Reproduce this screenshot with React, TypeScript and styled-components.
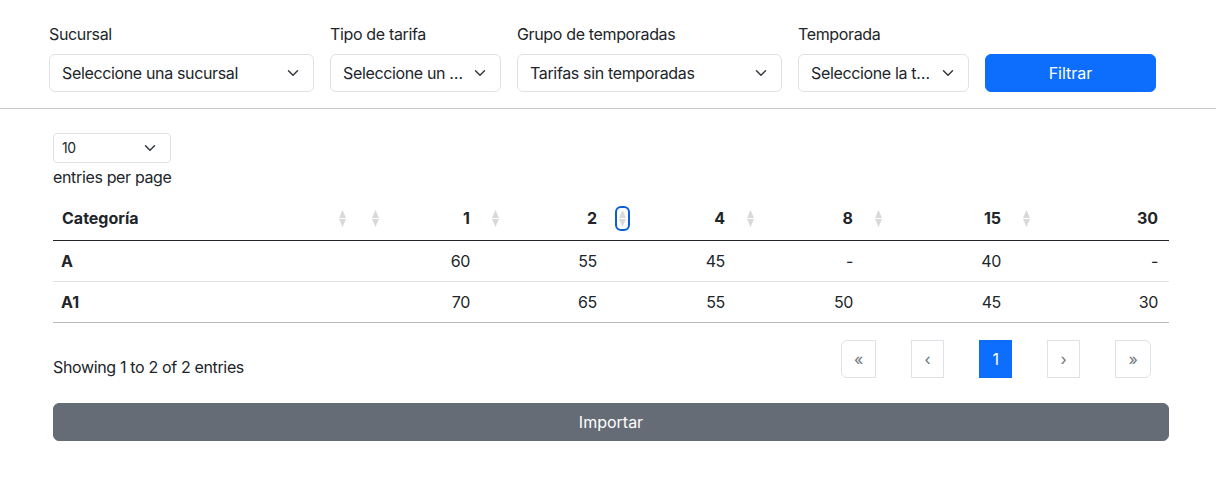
import React from "react";
import styled, { createGlobalStyle } from "styled-components";

const GlobalStyle = createGlobalStyle`
  * { box-sizing: border-box; }
  body {
    margin: 0;
    background: #fff;
    color: #212529;
    font-family: Inter, "Noto Sans", "Liberation Sans", sans-serif;
    font-size: 16px;
    line-height: 24px;
    letter-spacing: -0.35px;
  }
`;

const FilterBar = styled.div`
  display: flex;
  align-items: flex-end;
  gap: 16px;
  padding: 22px 0 16px 49px;
`;

const Field = styled.div<{ $w: number }>`
  display: flex;
  flex-direction: column;
  width: ${(p) => p.$w}px;
`;

const Label = styled.label`
  font-size: 16px;
  line-height: 24px;
  margin-bottom: 8px;
`;

const SelectBox = styled.div<{ $small?: boolean }>`
  display: flex;
  align-items: center;
  gap: 4px;
  height: ${(p) => (p.$small ? 30 : 38)}px;
  padding: 0 12px 0 ${(p) => (p.$small ? 8 : 12)}px;
  border: 1px solid #dee2e6;
  border-radius: ${(p) => (p.$small ? 4 : 6)}px;
  background: #fff;
  font-size: ${(p) => (p.$small ? 14 : 16)}px;
  color: #212529;
`;

const SelectText = styled.span`
  flex: 1;
  min-width: 0;
  white-space: nowrap;
  overflow: hidden;
`;

const PrimaryButton = styled.button`
  width: 171px;
  height: 38px;
  border: 1px solid #0d6efd;
  border-radius: 6px;
  background: #0d6efd;
  color: #fff;
  font: inherit;
  font-size: 16px;
`;

const Divider = styled.hr`
  margin: 0;
  border: 0;
  border-top: 1px solid #c8c9ca;
`;

const Main = styled.div`
  padding: 24px 47px 0 53px;
`;

const PerPage = styled.div`
  width: 118px;
`;

const EntriesText = styled.div`
  margin-top: 2px;
  line-height: 24px;
`;

const Table = styled.div`
  margin-top: 10px;
`;

const Row = styled.div<{ $head?: boolean; $last?: boolean }>`
  display: grid;
  grid-template-columns: 305px 120px 127px 128px 128px 148px 1fr;
  height: ${(p) => (p.$head ? 42 : 41)}px;
  padding: 0 3px ${(p) => (p.$head ? 3 : 0)}px 0;
  border-bottom: 1px solid
    ${(p) => (p.$head ? "#212529" : p.$last ? "#b9bcbf" : "#dee2e6")};
`;

const Cell = styled.div<{ $bold?: boolean; $left?: boolean }>`
  display: flex;
  align-items: center;
  justify-content: ${(p) => (p.$left ? "flex-start" : "flex-end")};
  padding: 0 8px;
  font-weight: ${(p) => (p.$bold ? 700 : 400)};
  letter-spacing: ${(p) => (p.$bold ? 0 : -0.35)}px;
  white-space: nowrap;
`;

const HeadCell = styled.div<{ $first?: boolean }>`
  display: flex;
  align-items: center;
  justify-content: space-between;
  padding: ${(p) => (p.$first ? "0 12px 0 9px" : "0 8px 0 14px")};
  font-weight: 700;
  letter-spacing: 0;
  white-space: nowrap;
`;

const SortWrap = styled.span<{ $focus?: boolean }>`
  display: inline-flex;
  align-items: center;
  justify-content: center;
  width: 7px;
  height: 17px;
  ${(p) =>
    p.$focus
      ? `outline: 2px solid #0b5ed7; outline-offset: 2px; border-radius: 2px;`
      : ""}
`;

const Footer = styled.div`
  display: flex;
  justify-content: space-between;
  align-items: flex-end;
  margin-top: 17px;
`;

const Info = styled.div`
  line-height: 24px;
  margin-bottom: -1px;
`;

const Pagination = styled.nav`
  display: flex;
  gap: 35px;
  padding-right: 18px;
`;

const PageBox = styled.span<{ $w: number; $active?: boolean; $pos?: "first" | "last" }>`
  display: flex;
  align-items: center;
  justify-content: center;
  width: ${(p) => p.$w}px;
  height: 38px;
  border: 1px solid ${(p) => (p.$active ? "#0d6efd" : "#dee2e6")};
  background: ${(p) => (p.$active ? "#0d6efd" : "#fff")};
  color: ${(p) => (p.$active ? "#fff" : "#6c757d")};
  border-radius: ${(p) =>
    p.$pos === "first" ? "6px 0 0 6px" : p.$pos === "last" ? "0 6px 6px 0" : "0"};
  font-size: 16px;
`;

const SecondaryButton = styled.button`
  display: block;
  width: 100%;
  height: 38px;
  margin-top: 25px;
  border: 1px solid #656c75;
  border-radius: 6px;
  background: #656c75;
  color: #fff;
  font: inherit;
  font-size: 16px;
`;

const Chevron = () => (
  <svg width="16" height="12" viewBox="0 0 16 16" style={{ flexShrink: 0 }}>
    <path
      d="M2 5l6 6 6-6"
      fill="none"
      stroke="#343a40"
      strokeWidth="2"
      strokeLinecap="round"
      strokeLinejoin="round"
    />
  </svg>
);

const SortIcon = ({ focus }: { focus?: boolean }) => (
  <SortWrap $focus={focus}>
    <svg width="7" height="17" viewBox="0 0 7 17">
      <polygon points="3.5,0 7,8 0,8" fill="#d9d9d9" />
      <polygon points="0,9 7,9 3.5,17" fill="#d9d9d9" />
    </svg>
  </SortWrap>
);

const filters = [
  { label: "Sucursal", value: "Seleccione una sucursal", w: 265 },
  { label: "Tipo de tarifa", value: "Seleccione un …", w: 171 },
  { label: "Grupo de temporadas", value: "Tarifas sin temporadas", w: 265 },
  { label: "Temporada", value: "Seleccione la t…", w: 171 },
];

const headers = ["1", "2", "4", "8", "15", "30"];
const rows = [
  { cat: "A", vals: ["60", "55", "45", "-", "40", "-"] },
  { cat: "A1", vals: ["70", "65", "55", "50", "45", "30"] },
];

export default function App() {
  return (
    <>
      <GlobalStyle />
      <FilterBar>
        {filters.map((f) => (
          <Field key={f.label} $w={f.w}>
            <Label>{f.label}</Label>
            <SelectBox>
              <SelectText>{f.value}</SelectText>
              <Chevron />
            </SelectBox>
          </Field>
        ))}
        <PrimaryButton>Filtrar</PrimaryButton>
      </FilterBar>
      <Divider />
      <Main>
        <PerPage>
          <SelectBox $small>
            <SelectText>10</SelectText>
            <Chevron />
          </SelectBox>
        </PerPage>
        <EntriesText>entries per page</EntriesText>
        <Table>
          <Row $head>
            <HeadCell $first>
              <span>Categoría</span>
              <SortIcon />
            </HeadCell>
            {headers.map((h, i) => (
              <HeadCell key={h}>
                <SortIcon focus={i === 2} />
                <span>{h}</span>
              </HeadCell>
            ))}
          </Row>
          {rows.map((r, ri) => (
            <Row key={r.cat} $last={ri === rows.length - 1}>
              <Cell $bold $left>
                {r.cat}
              </Cell>
              {r.vals.map((v, i) => (
                <Cell key={i}>{v}</Cell>
              ))}
            </Row>
          ))}
        </Table>
        <Footer>
          <Info>Showing 1 to 2 of 2 entries</Info>
          <Pagination>
            <PageBox $w={35} $pos="first">«</PageBox>
            <PageBox $w={33}>‹</PageBox>
            <PageBox $w={33} $active>1</PageBox>
            <PageBox $w={33}>›</PageBox>
            <PageBox $w={36} $pos="last">»</PageBox>
          </Pagination>
        </Footer>
        <SecondaryButton>Importar</SecondaryButton>
      </Main>
    </>
  );
}
